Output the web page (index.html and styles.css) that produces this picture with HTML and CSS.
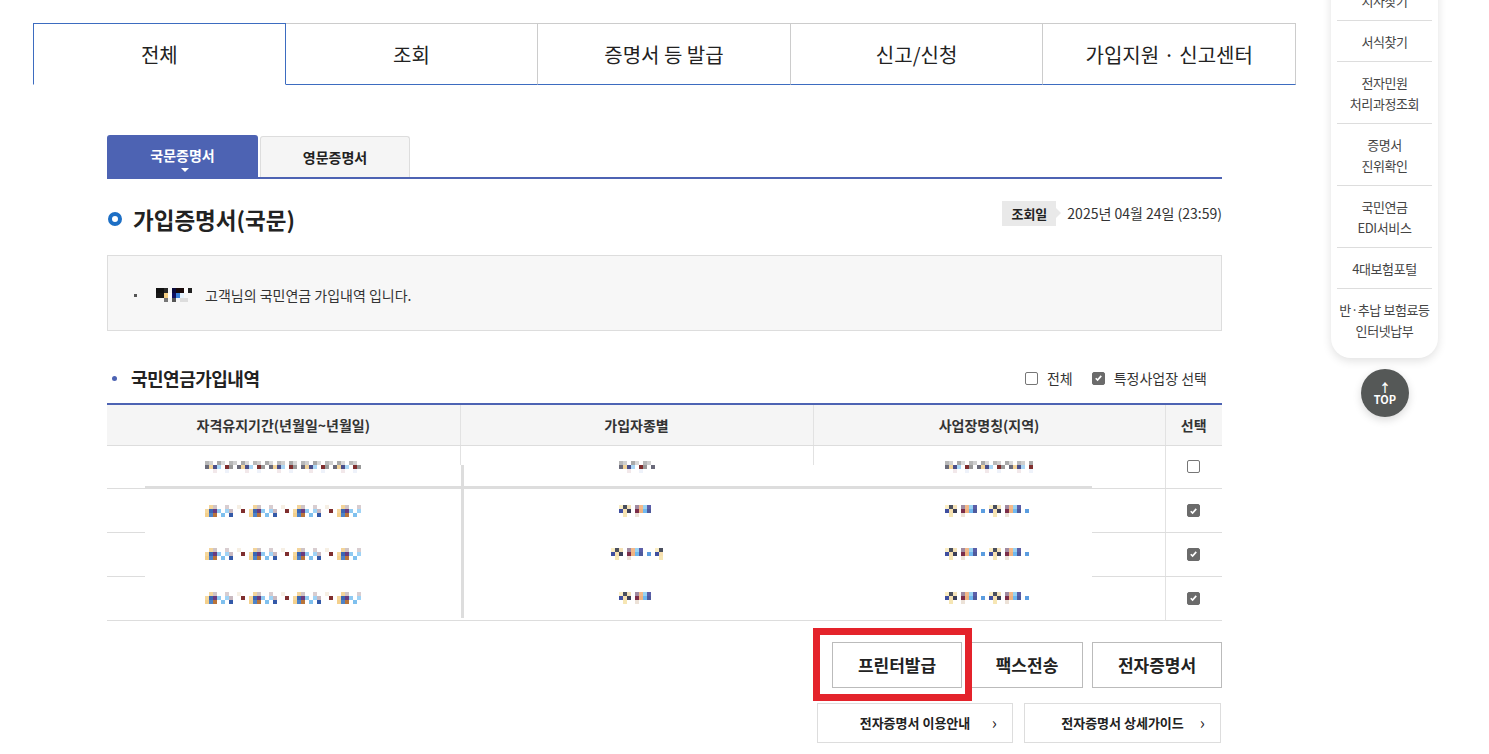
FILE: index.html
```html
<html>
<head>
<meta charset="utf-8">
<link rel="stylesheet" href="styles.css">
</head>
<body>
<div class="page">
  <ul class="main-tabs">
    <li class="is-active">전체</li>
    <li>조회</li>
    <li>증명서 등 발급</li>
    <li>신고/신청</li>
    <li>가입지원 · 신고센터</li>
  </ul>

  <div class="content">
    <div class="sub-tabs">
      <a class="sub-tab is-active">국문증명서</a>
      <a class="sub-tab">영문증명서</a>
    </div>

    <div class="title-row">
      <h2 class="page-title">가입증명서(국문)</h2>
      <div class="query-date">
        <span class="query-date__label">조회일</span>
        <span class="query-date__value">2025년 04월 24일 (23:59)</span>
      </div>
    </div>

    <div class="notice">
      <ul>
        <li><span class="mz mz-user"></span>고객님의 국민연금 가입내역 입니다.</li>
      </ul>
    </div>

    <div class="section-head">
      <h3 class="section-title">국민연금가입내역</h3>
      <div class="checks">
        <label><span class="cb"></span>전체</label>
        <label><span class="cb is-checked"><svg viewBox="0 0 12 12" width="12" height="12"><path d="M3 6.3l2 2 4-4.6" fill="none" stroke="#fff" stroke-width="1.8"/></svg></span>특정사업장 선택</label>
      </div>
    </div>

    <div class="grid-wrap">
      <table class="grid">
        <colgroup>
          <col class="c1"><col class="c2"><col class="c3"><col class="c4">
        </colgroup>
        <thead>
          <tr><th>자격유지기간(년월일~년월일)</th><th>가입자종별</th><th>사업장명칭(지역)</th><th>선택</th></tr>
        </thead>
        <tbody>
          <tr>
            <td><span class="mz mz-date mz-faint"></span></td>
            <td><span class="mz mz-type mz-faint"></span></td>
            <td><span class="mz mz-corp mz-faint"></span></td>
            <td><span class="cb"></span></td>
          </tr>
          <tr>
            <td><span class="mz mz-date"></span></td>
            <td><span class="mz mz-type mz-alt"></span></td>
            <td><span class="mz mz-corp mz-alt"></span></td>
            <td><span class="cb is-checked"><svg viewBox="0 0 12 12" width="12" height="12"><path d="M3 6.3l2 2 4-4.6" fill="none" stroke="#fff" stroke-width="1.8"/></svg></span></td>
          </tr>
          <tr>
            <td><span class="mz mz-date"></span></td>
            <td><span class="mz mz-type-wide mz-alt"></span></td>
            <td><span class="mz mz-corp mz-alt"></span></td>
            <td><span class="cb is-checked"><svg viewBox="0 0 12 12" width="12" height="12"><path d="M3 6.3l2 2 4-4.6" fill="none" stroke="#fff" stroke-width="1.8"/></svg></span></td>
          </tr>
          <tr>
            <td><span class="mz mz-date"></span></td>
            <td><span class="mz mz-type mz-alt"></span></td>
            <td><span class="mz mz-corp mz-alt"></span></td>
            <td><span class="cb is-checked"><svg viewBox="0 0 12 12" width="12" height="12"><path d="M3 6.3l2 2 4-4.6" fill="none" stroke="#fff" stroke-width="1.8"/></svg></span></td>
          </tr>
        </tbody>
      </table>
      <div class="smear"></div>
    </div>

    <div class="btn-row">
      <a class="btn btn--print">프린터발급</a>
      <a class="btn btn--fax">팩스전송</a>
      <a class="btn btn--cert">전자증명서</a>
      <span class="mark"></span>
    </div>

    <div class="link-row">
      <a class="link-btn">전자증명서 이용안내<i>&rsaquo;</i></a>
      <a class="link-btn">전자증명서 상세가이드<i>&rsaquo;</i></a>
    </div>
  </div>
</div>

<aside class="quick">
  <ul>
    <li>지사찾기</li>
    <li>서식찾기</li>
    <li>전자민원<br>처리과정조회</li>
    <li>증명서<br>진위확인</li>
    <li>국민연금<br>EDI서비스</li>
    <li>4대보험포털</li>
    <li>반·추납 보험료등<br>인터넷납부</li>
  </ul>
</aside>
<a class="top-btn"><span>&#8593;</span>TOP</a>
</body>
</html>
```

FILE: styles.css
```css
/* reset */
*, *::before, *::after {
  padding: 0;
  margin: 0;
  box-sizing: border-box;
}

ul {
  list-style: none;
}

a {
  text-decoration: none;
  color: inherit;
}

body {
  background-color: #fff;
  font-family: "Noto Sans CJK KR", "Noto Sans", sans-serif;
  color: #333;
  font-size: 14px;
}

.page {
  width: 1296px;
  padding: 23px 0 0 33px;
}

/* main tabs */
.main-tabs {
  display: grid;
  grid-template-columns: repeat(5, 1fr);
  width: 1263px;
}

.main-tabs li {
  height: 62px;
  display: flex;
  align-items: center;
  justify-content: center;
  font-size: 20px;
  color: #222;
  border-top: 1px solid #ccc;
  border-right: 1px solid #ccc;
  border-bottom: 1px solid #3d6cc0;
}

.main-tabs li.is-active {
  border: 1px solid #3d6cc0;
  border-bottom-color: #fff;
}

/* content */
.content {
  width: 1115px;
  margin: 50px 0 0 74px;
}

.sub-tabs {
  display: flex;
  align-items: flex-end;
  gap: 2px;
  border-bottom: 2px solid #4d63b3;
}

.sub-tab {
  position: relative;
  width: 150px;
  height: 41px;
  display: flex;
  align-items: center;
  justify-content: center;
  font-size: 14px;
  font-weight: bold;
  color: #222;
  background-color: #f5f5f5;
  border: 1px solid #ddd;
  border-bottom: 0;
  border-radius: 3px 3px 0 0;
}

.sub-tab.is-active {
  width: 151px;
  height: 42px;
  color: #fff;
  background-color: #4d63b3;
  border: 0;
  padding-bottom: 2px;
}

.sub-tab.is-active::after {
  content: '';
  position: absolute;
  left: 74px;
  bottom: 5px;
  border-top: 4px solid #fff;
  border-left: 4px solid transparent;
  border-right: 4px solid transparent;
}

.title-row {
  display: flex;
  justify-content: space-between;
  align-items: flex-start;
  margin-top: 22px;
}

.page-title {
  display: flex;
  align-items: center;
  font-size: 22.5px;
  line-height: 36px;
  font-weight: bold;
  color: #222;
}

.page-title::before {
  content: '';
  width: 14px;
  height: 14px;
  margin: 0 11px 0 1px;
  border: 4px solid #1d6fc5;
  border-radius: 50%;
}

.query-date {
  display: flex;
  align-items: center;
  line-height: 25px;
}

.query-date__label {
  position: relative;
  height: 25px;
  padding: 0 9px;
  margin-right: 11px;
  font-size: 13px;
  font-weight: bold;
  color: #222;
  background-color: #e9e9e9;
}

.query-date__label::after {
  content: '';
  position: absolute;
  top: 7px;
  right: -5px;
  border-left: 5px solid #e9e9e9;
  border-top: 5px solid transparent;
  border-bottom: 5px solid transparent;
}

.query-date__value {
  font-size: 14px;
  color: #333;
}

.notice {
  margin-top: 18px;
  height: 76px;
  display: flex;
  align-items: center;
  padding: 4px 0 0 26px;
  background-color: #f7f7f7;
  border: 1px solid #ddd;
}

.notice li {
  display: flex;
  align-items: center;
  font-size: 14px;
  color: #333;
}

.notice li::before {
  content: '';
  width: 3px;
  height: 3px;
  margin-right: 19px;
  background-color: #555;
}

/* section */
.section-head {
  display: flex;
  justify-content: space-between;
  align-items: center;
  margin-top: 33px;
  height: 28px;
}

.section-title {
  display: flex;
  align-items: center;
  font-size: 18px;
  letter-spacing: -0.5px;
  font-weight: bold;
  color: #222;
}

.section-title::before {
  content: '';
  width: 5px;
  height: 5px;
  margin: 0 14px 0 5px;
  border-radius: 50%;
  background-color: #4d63b3;
}

.checks {
  display: flex;
  gap: 19px;
  padding-right: 15px;
  font-size: 14px;
  color: #333;
}

.checks label {
  display: flex;
  align-items: center;
  gap: 9px;
}

.cb {
  display: inline-flex;
  align-items: center;
  justify-content: center;
  width: 13px;
  height: 13px;
  border: 1px solid #767676;
  border-radius: 2px;
  background-color: #fff;
  vertical-align: middle;
}

.cb.is-checked {
  border-color: #6b6b6b;
  background-color: #6b6b6b;
}

/* table */
.grid-wrap {
  position: relative;
  margin-top: 11px;
}

.grid {
  width: 100%;
  border-collapse: collapse;
  border-top: 2px solid #4d63b3;
  border-bottom: 1px solid #b5b5b5;
  table-layout: fixed;
}

.grid .c1 { width: 353px; }
.grid .c2 { width: 353px; }
.grid .c3 { width: 352px; }
.grid .c4 { width: 57px; }

.grid th {
  height: 41px;
  font-size: 14px;
  font-weight: bold;
  color: #333;
  background-color: #f5f5f5;
  border-bottom: 1px solid #ddd;
  border-left: 1px solid #e2e2e2;
}

.grid td {
  height: 43.75px;
  text-align: center;
  border-bottom: 1px solid #ddd;
  border-left: 1px solid #e2e2e2;
}

.grid th:first-child,
.grid td:first-child {
  border-left: 0;
}

/* white patch left over in the capture */
.smear {
  position: absolute;
  left: 38px;
  top: 62px;
  width: 947px;
  height: 155px;
  background-color: #fff;
  z-index: 1;
}

.smear::before {
  content: '';
  position: absolute;
  left: 0;
  right: 0;
  top: 21px;
  height: 3px;
  background-color: #ddd;
}

.smear::after {
  content: '';
  position: absolute;
  left: 316px;
  top: 0;
  bottom: 2px;
  width: 3px;
  background-color: #ddd;
}

/* mosaic of hidden personal data */
.mz {
  position: relative;
  z-index: 2;
  display: inline-block;
  height: 12px;
  vertical-align: middle;
  background-image:
    repeating-linear-gradient(90deg, transparent 0 4px, #f3d49a 4px 8px, #cfc4c6 8px 12px, transparent 12px 20px, #d8cdd0 20px 24px, transparent 24px 32px, #f6efe4 32px 36px, transparent 36px 44px),
    repeating-linear-gradient(90deg, #f6d89c 0 4px, #3b66b3 4px 8px, #6a3b7d 8px 12px, #8fcaf2 12px 16px, transparent 16px 20px, #9fd3f6 20px 24px, #c9b9c0 24px 28px, transparent 28px 36px, #7f2e2e 36px 40px, transparent 40px 44px),
    repeating-linear-gradient(90deg, #f4d08c 0 4px, #4d83c9 4px 8px, #b9743a 8px 12px, transparent 12px 16px, #7fc0ee 16px 20px, transparent 20px 24px, #3359a8 24px 28px, transparent 28px 44px);
  background-size: 100% 4px;
  background-position: 0 0, 0 4px, 0 8px;
  background-repeat: no-repeat;
}

.mz-alt {
  background-image:
    repeating-linear-gradient(90deg, #fbeec4 0 4px, #4a4f5e 4px 8px, #f4e2b8 8px 12px, transparent 12px 16px, #a08aa0 16px 20px, #f3b98a 20px 24px, #9ad3f2 24px 28px, #5b5ea8 28px 32px, transparent 32px 44px),
    repeating-linear-gradient(90deg, #3f4fa0 0 4px, #f7e0b0 4px 8px, #3b3f58 8px 12px, transparent 12px 16px, #7b2d4a 16px 20px, #f0b380 20px 24px, #6fb8f0 24px 28px, #4f5a9c 28px 32px, transparent 32px 36px, #5b9de0 36px 40px, transparent 40px 44px),
    repeating-linear-gradient(90deg, transparent 0 4px, #f6e6b4 4px 8px, transparent 8px 16px, #ece2d8 16px 20px, transparent 20px 44px);
}

.mz-faint {
  background-image:
    repeating-linear-gradient(90deg, #b8b8b8 0 4px, #cfcfcf 4px 8px, transparent 8px 12px, #a9a9a9 12px 16px, #d8d8d8 16px 20px, transparent 20px 24px),
    repeating-linear-gradient(90deg, #6a6a7a 0 4px, #f3d49a 4px 8px, #4a4f8a 8px 12px, #aad6f5 12px 16px, transparent 16px 20px, #7f2e2e 20px 24px, #999 24px 28px, transparent 28px 32px),
    repeating-linear-gradient(90deg, transparent 0 8px, #f2e8ea 8px 12px, transparent 12px 20px, #eef2fa 20px 24px, transparent 24px 32px);
}

.mz-date { width: 156px; }
.mz-type { width: 36px; }
.mz-type-wide { width: 52px; }
.mz-corp { width: 88px; }

.mz-user {
  width: 46px;
  height: 14px;
  margin-right: 3px;
  background-image:
    repeating-linear-gradient(90deg, #111 0 8px, #2a2a2a 8px 12px, transparent 12px 16px, #0b0b3a 16px 20px, #1a0a0a 20px 28px, #fff 28px 32px, #222 32px 36px, transparent 36px 46px),
    repeating-linear-gradient(90deg, #181818 0 8px, #f3cd82 8px 12px, #fff 12px 16px, #101060 16px 20px, #3a80d8 20px 24px, #e6f4ff 24px 28px, transparent 28px 46px),
    repeating-linear-gradient(90deg, transparent 0 8px, #777 8px 12px, transparent 12px 16px, #555 16px 20px, transparent 20px 24px, #ddd 24px 32px, transparent 32px 46px);
  background-size: 100% 5px;
  background-position: 0 0, 0 5px, 0 10px;
}

/* buttons */
.btn-row {
  position: relative;
  display: flex;
  justify-content: flex-end;
  gap: 9px;
  margin-top: 21px;
}

.btn {
  height: 46px;
  display: flex;
  align-items: center;
  justify-content: center;
  font-size: 17px;
  font-weight: bold;
  color: #222;
  background-color: #fff;
  border: 1px solid #bbb;
}

.btn--print,
.btn--cert {
  width: 130px;
}

.btn--fax {
  width: 112px;
}

.mark {
  position: absolute;
  left: 706px;
  top: -14px;
  width: 159px;
  height: 73px;
  border: 7px solid #e4232b;
}

.link-row {
  display: flex;
  justify-content: flex-end;
  gap: 11px;
  margin: 15px 1px 0 0;
}

.link-row .link-btn {
  position: relative;
  width: 196px;
  height: 40px;
  display: flex;
  align-items: center;
  justify-content: center;
  font-size: 13px;
  font-weight: bold;
  color: #222;
  border: 1px solid #ddd;
}

.link-btn:last-child {
  width: 197px;
}

.link-btn i {
  position: absolute;
  right: 15px;
  top: 7px;
  font-style: normal;
  font-weight: normal;
  font-size: 17px;
  line-height: 22px;
}

/* quick menu */
.quick {
  position: absolute;
  left: 1331px;
  top: -20px;
  width: 107px;
  padding: 0 6px 8px;
  background-color: #fff;
  border-radius: 0 0 20px 20px;
  box-shadow: 0 3px 10px rgba(0, 0, 0, 0.12);
}

.quick li {
  padding: 9.5px 0;
  text-align: center;
  font-size: 13px;
  line-height: 21px;
  letter-spacing: -0.4px;
  color: #444;
  border-top: 1px solid #ddd;
}

.quick li:first-child {
  border-top: 0;
}

.top-btn {
  position: absolute;
  left: 1361px;
  top: 369px;
  width: 48px;
  height: 48px;
  display: flex;
  flex-direction: column;
  align-items: center;
  justify-content: center;
  border-radius: 50%;
  background-color: #555857;
  box-shadow: 0 3px 8px rgba(0, 0, 0, 0.15);
  color: #fff;
  font-size: 11px;
  font-weight: bold;
  line-height: 12px;
}

.top-btn span {
  font-size: 12px;
  line-height: 11px;
}
```
